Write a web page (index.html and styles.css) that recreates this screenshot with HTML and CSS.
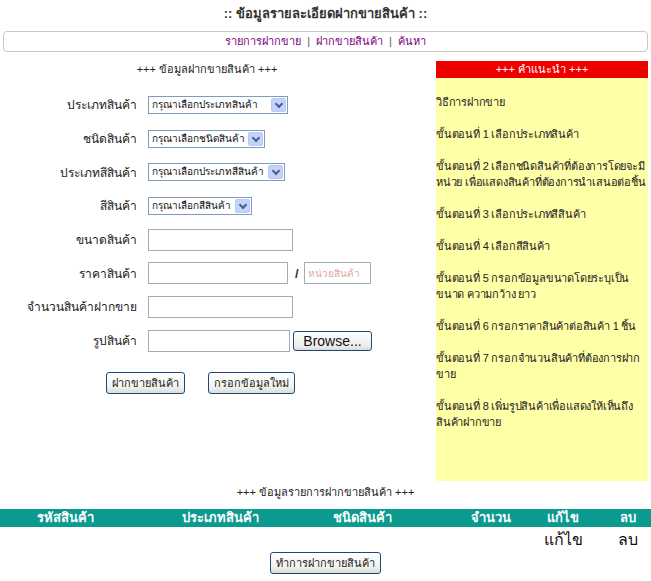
FILE: index.html
```html
<!DOCTYPE html>
<html lang="th">
<head>
<meta charset="utf-8">
<title>ข้อมูลรายละเอียดฝากขายสินค้า</title>
<link rel="stylesheet" href="styles.css">
</head>
<body>
<div class="page">
  <h1 class="title">:: ข้อมูลรายละเอียดฝากขายสินค้า ::</h1>
  <nav class="nav">
    <a href="#">รายการฝากขาย</a><span class="sep">|</span><a href="#">ฝากขายสินค้า</a><span class="sep">|</span><a href="#">ค้นหา</a>
  </nav>

  <div class="main">
    <section class="left">
      <div class="sec-title">+++ ข้อมูลฝากขายสินค้า +++</div>
      <form class="form">
        <label class="lbl">ประเภทสินค้า</label>
        <div class="ctl"><span class="sel w140">กรุณาเลือกประเภทสินค้า<span class="arrow"></span></span></div>

        <label class="lbl">ชนิดสินค้า</label>
        <div class="ctl"><span class="sel w117">กรุณาเลือกชนิดสินค้า<span class="arrow"></span></span></div>

        <label class="lbl">ประเภทสีสินค้า</label>
        <div class="ctl"><span class="sel w137">กรุณาเลือกประเภทสีสินค้า<span class="arrow"></span></span></div>

        <label class="lbl">สีสินค้า</label>
        <div class="ctl"><span class="sel w104">กรุณาเลือกสีสินค้า<span class="arrow"></span></span></div>

        <label class="lbl">ขนาดสินค้า</label>
        <div class="ctl"><input class="txt w145" type="text"></div>

        <label class="lbl">ราคาสินค้า</label>
        <div class="ctl"><input class="txt w140" type="text"><span class="slash">/</span><input class="txt unit" type="text" placeholder="หน่วยสินค้า"></div>

        <label class="lbl">จำนวนสินค้าฝากขาย</label>
        <div class="ctl"><input class="txt w145" type="text"></div>

        <label class="lbl">รูปสินค้า</label>
        <div class="ctl"><input class="txt w142" type="text"><button type="button" class="browse">Browse...</button></div>
      </form>
      <div class="actions">
        <button type="button" class="btn">ฝากขายสินค้า</button>
        <button type="button" class="btn">กรอกข้อมูลใหม่</button>
      </div>
    </section>

    <aside class="help">
      <div class="help-head">+++ คำแนะนำ +++</div>
      <div class="help-body">
        <p>วิธีการฝากขาย</p>
        <p>ขั้นตอนที่ 1 เลือกประเภทสินค้า</p>
        <p>ขั้นตอนที่ 2 เลือกชนิดสินค้าที่ต้องการโดยจะมี<br>หน่วย เพื่อแสดงสินค้าที่ต้องการนำเสนอต่อชิ้น</p>
        <p>ขั้นตอนที่ 3 เลือกประเภทสีสินค้า</p>
        <p>ขั้นตอนที่ 4 เลือกสีสินค้า</p>
        <p>ขั้นตอนที่ 5 กรอกข้อมูลขนาดโดยระบุเป็น<br>ขนาด ความกว้าง ยาว</p>
        <p>ขั้นตอนที่ 6 กรอกราคาสินค้าต่อสินค้า 1 ชิ้น</p>
        <p>ขั้นตอนที่ 7 กรอกจำนวนสินค้าที่ต้องการฝาก<br>ขาย</p>
        <p>ขั้นตอนที่ 8 เพิ่มรูปสินค้าเพื่อแสดงให้เห็นถึง<br>สินค้าฝากขาย</p>
      </div>
    </aside>
  </div>

  <div class="list-title">+++ ข้อมูลรายการฝากขายสินค้า +++</div>
  <div class="grid head">
    <div>รหัสสินค้า</div>
    <div>ประเภทสินค้า</div>
    <div>ชนิดสินค้า</div>
    <div class="c4">จำนวน</div>
    <div>แก้ไข</div>
    <div>ลบ</div>
  </div>
  <div class="grid row">
    <div></div>
    <div></div>
    <div></div>
    <div class="c4"></div>
    <div>แก้ไข</div>
    <div>ลบ</div>
  </div>
  <div class="submit">
    <button type="button" class="btn">ทำการฝากขายสินค้า</button>
  </div>
</div>
</body>
</html>
```

FILE: styles.css
```css
* { box-sizing: border-box; }
body {
  margin: 0;
  background: #fff;
  font-family: "Liberation Sans", Tahoma, "DejaVu Sans", sans-serif;
  font-size: 12px;
  color: #222;
}
.page { width: 651px; }
.title {
  margin: 0;
  height: 28px;
  line-height: 28px;
  text-align: center;
  font-size: 13px;
  font-weight: bold;
  color: #333;
}
.nav {
  margin: 3px 3px 0 3px;
  height: 21px;
  border: 1px solid #c8c8c8;
  border-radius: 4px;
  text-align: center;
  line-height: 19px;
  font-size: 11px;
}
.nav a { color: #800080; text-decoration: none; }
.nav .sep { color: #555; margin: 0 6px; }

.main {
  display: flex;
  margin-top: 9px;
}
.left { width: 436px; }
.sec-title {
  height: 17px;
  line-height: 17px;
  text-align: center;
  margin-right: 22px;
  font-size: 11px;
  color: #222;
}
.form {
  margin: 10px 0 0 0;
  display: grid;
  grid-template-columns: 137px 1fr;
  column-gap: 11px;
  grid-auto-rows: 33.7px;
  align-items: center;
}
.lbl { text-align: right; color: #222; }
.ctl { display: flex; align-items: center; }
.sel {
  position: relative;
  display: inline-block;
  height: 18px;
  line-height: 16px;
  border: 1px solid #7f9db9;
  padding-left: 3px;
  font-size: 10px;
  color: #111;
  background: #fff;
  white-space: nowrap;
  overflow: hidden;
}
.sel .arrow {
  position: absolute;
  right: 1px;
  top: 1px;
  width: 15px;
  height: 14px;
  background: #c3d3fd;
  border: 1px solid #b8c9f4;
  border-radius: 2px;
}
.sel .arrow::after {
  content: "";
  position: absolute;
  left: 4px;
  top: 2px;
  width: 4px;
  height: 4px;
  border-right: 2px solid #4d6185;
  border-bottom: 2px solid #4d6185;
  transform: rotate(45deg);
}
.w140 { width: 140px; }
.w117 { width: 117px; }
.w137 { width: 137px; }
.w104 { width: 104px; }
.w145 { width: 145px; }
.w142 { width: 142px; }
.txt {
  height: 22px;
  border: 1px solid #a5acb2;
  padding: 0 3px;
  font-family: inherit;
  font-size: 12px;
  background: #fff;
}
.txt.w140 { width: 140px; }
.slash { font-weight: bold; margin: 0 5px 0 7px; color: #333; font-size: 13px; }
.unit { width: 67px; }
.unit::placeholder { color: #e0a8a0; font-size: 10px; }
.browse {
  margin-left: 3px;
  height: 20px;
  width: 79px;
  padding: 0;
  border: 1px solid #1f4a6b;
  border-radius: 3px;
  background: linear-gradient(#ffffff, #ececec 80%, #d8d8d8);
  font-family: "Liberation Sans", Arial, sans-serif;
  font-size: 14px;
  color: #111;
}
.actions {
  margin-top: 14px;
  display: flex;
  gap: 23px;
  padding-left: 106px;
}
.btn {
  height: 22px;
  padding: 0 5px;
  border: 1px solid #1c4a80;
  border-radius: 3px;
  background: linear-gradient(#ffffff, #f2f2ee 70%, #dcdcd4);
  font-family: inherit;
  font-size: 11px;
  color: #222;
}

.help { width: 212px; background: #ffffa8; height: 420px; }
.help-head {
  height: 17px;
  line-height: 17px;
  background: #ee0000;
  color: #fff;
  text-align: center;
  font-size: 11px;
}
.help-body { padding-top: 16px; }
.help-body p {
  margin: 0 0 16px 0;
  line-height: 16px;
  font-size: 11px;
  letter-spacing: -0.2px;
  color: #222;
  white-space: nowrap;
}

.list-title {
  height: 24px;
  line-height: 22px;
  text-align: center;
  font-size: 11px;
}
.grid {
  display: grid;
  grid-template-columns: 130px 180px 104px 107px 84px 46px;
  text-align: center;
}
.grid .c4 { padding-left: 47px; }
.head {
  margin-top: 4px;
  height: 18px;
  line-height: 18px;
  background: #0a9a90;
  color: #fff;
  font-weight: bold;
  font-size: 13px;
}
.row {
  height: 24px;
  line-height: 26px;
  font-size: 16px;
  color: #111;
}
.submit { text-align: center; padding-top: 1px; }
```
